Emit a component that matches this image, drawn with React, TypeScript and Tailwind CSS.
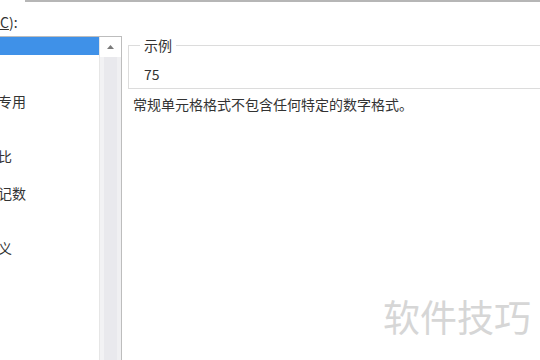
const ITEMS = ['常规', '数值', '货币', '会计专用', '日期', '时间', '百分比', '分数', '科学记数', '文本', '特殊', '自定义']

function UpArrow() {
  return (
    <svg width="7" height="4" viewBox="0 0 7 4">
      <polygon points="0,4 3.5,0 7,4" fill="#7a7a7a" />
    </svg>
  )
}

export default function App() {
  return (
    <div className="relative w-[540px] h-[360px] overflow-hidden bg-white text-[#333] font-['Noto_Sans_CJK_SC','Noto_Sans',sans-serif]">
      <div className="ml-[25px] h-[2px] bg-[#b6b6b6]" />

      <div className="flex">
        {/* category list */}
        <div className="w-[122px] shrink-0">
          <div className="h-[34px] pt-[11px] text-[14px] leading-[18px]">
            <span className="underline">C</span>):
          </div>
          <div className="flex h-[330px] border-t border-r border-[#bdbdbd]">
            <div className="w-[99px] overflow-hidden">
              <div className="-ml-[30px] flex flex-col">
                {ITEMS.map((it, i) => (
                  <div key={it}
                    className={i === 0
                      ? 'h-[18.4px] leading-[18.4px] text-[14px] whitespace-nowrap bg-[#3f91e8] text-white'
                      : 'h-[18.4px] leading-[18.4px] text-[14px] whitespace-nowrap'}>
                    {it}
                  </div>
                ))}
              </div>
            </div>
            <div className="w-[22px] flex flex-col border-l border-[#e6e6e6]">
              <div className="h-[20px] flex items-center justify-center bg-white">
                <UpArrow />
              </div>
              <div className="flex-1 flex">
                <div className="w-[4px] bg-[#f2f2f4]" />
                <div className="flex-1 bg-[#e9e9ed]" />
                <div className="w-[4px] bg-[#f0f0f2]" />
              </div>
            </div>
          </div>
        </div>

        {/* sample + description */}
        <div className="flex-1 pl-[6px]">
          <fieldset className="mt-[34px] w-[440px] border border-[#dcdcdc] pl-[15px] pt-[11px] pb-[5px]">
            <legend className="ml-[-4px] px-[4px] text-[14px] leading-[18px]">示例</legend>
            <div className="text-[14px] leading-[18px]">75</div>
          </fieldset>
          <p className="mt-[6px] ml-[5px] text-[14px] leading-[18px] whitespace-nowrap">
            常规单元格格式不包含任何特定的数字格式。
          </p>
        </div>
      </div>

      <div className="absolute left-[383px] top-[296px] text-[37px] leading-[40px] text-[#d6d6d6] whitespace-nowrap">
        软件技巧
      </div>
    </div>
  )
}
